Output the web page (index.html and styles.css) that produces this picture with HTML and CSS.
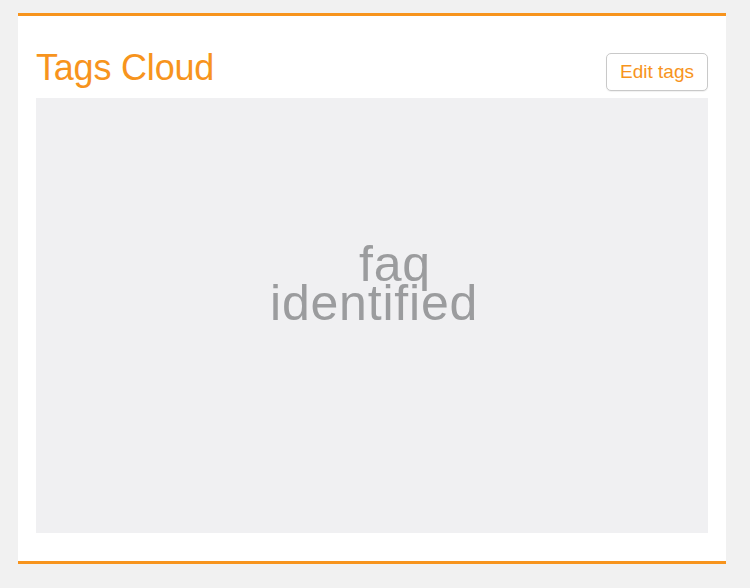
FILE: index.html
```html
<!DOCTYPE html>
<html lang="en">
<head>
    <meta charset="UTF-8">
    <meta name="viewport" content="width=device-width, initial-scale=1.0">
    <title>Tags Cloud</title>
    <link rel="stylesheet" href="styles.css">
</head>
<body>
    <div class="card">
        <!-- Header: title and edit button -->
        <div class="card-header">
            <h2 class="card-title">Tags Cloud</h2>
            <button type="button" class="edit-btn">Edit tags</button>
        </div>

        <div class="cloud">
            <span class="tag tag-faq">faq</span>
            <span class="tag tag-identified">identified</span>
        </div>
    </div>
</body>
</html>
```

FILE: styles.css
```css
body { margin: 0; background-color: #f1f1f1; font-family: "Liberation Sans", Arial, sans-serif; }
.card { width: 672px; margin: 13px 24px 0 18px; padding: 0 18px 28px; background-color: #fff; border-top: 3px solid #f7941d; border-bottom: 3px solid #f7941d; }
.card-header { display: flex; justify-content: space-between; align-items: flex-end; padding-top: 37px; margin-bottom: 7px; }
.card-title { margin: 0 0 8px; font-size: 36px; line-height: 30px; font-weight: normal; letter-spacing: -0.2px; color: #f7941d; }
.edit-btn { height: 38px; padding: 0 13px; font-family: inherit; font-size: 19px; line-height: 22px; color: #f7941d; background-color: #fff; border: 1px solid #c9c9c9; border-radius: 5px; box-shadow: 0 1px 1px rgba(0, 0, 0, 0.06); cursor: pointer; }
.cloud { position: relative; height: 435px; background-color: #f0f0f2; overflow: hidden; }
.tag { position: absolute; font-size: 50px; line-height: 50px; letter-spacing: 0.8px; color: #9b9c9e; white-space: nowrap; }
.tag-faq { left: 323px; top: 141px; }
.tag-identified { left: 234px; top: 180px; }
```
